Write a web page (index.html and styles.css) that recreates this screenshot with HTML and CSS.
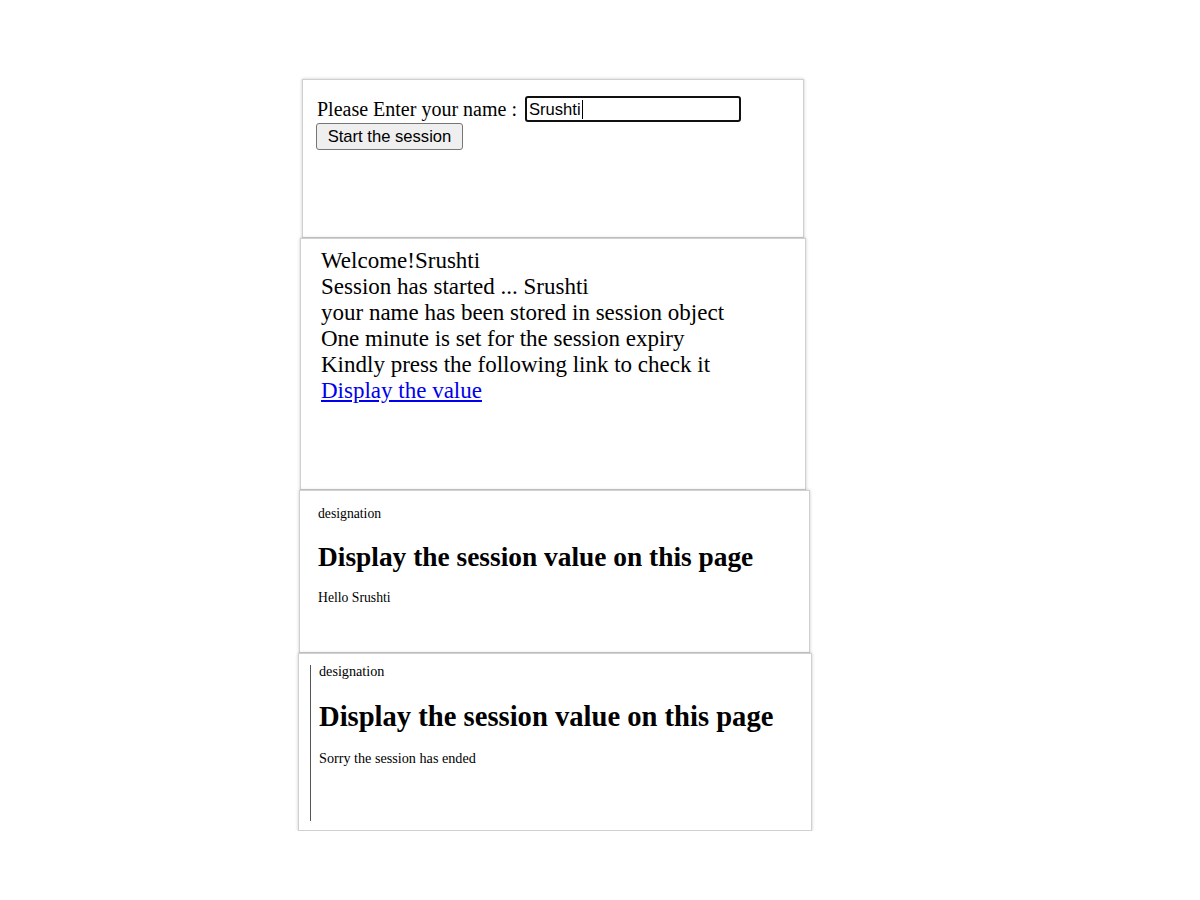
FILE: index.html
```html
<!DOCTYPE html>
<html lang="en">
<head>
<meta charset="utf-8">
<title>Session demo</title>
<link rel="stylesheet" href="styles.css">
</head>
<body>
<main class="stack">
  <section class="shot shot-form">
    <div class="form-row">
      <span class="label">Please Enter your name :</span>
      <div class="field" role="textbox">Srushti<span class="caret"></span></div>
    </div>
    <button class="btn" type="button">Start the session</button>
  </section>

  <section class="shot shot-welcome">
    <div class="lines">
      <div>Welcome!Srushti</div>
      <div>Session has started ... Srushti</div>
      <div>your name has been stored in session object</div>
      <div>One minute is set for the session expiry</div>
      <div>Kindly press the following link to check it</div>
      <div><a href="#" class="link">Display the value</a></div>
    </div>
  </section>

  <section class="shot shot-display">
    <p class="small">designation</p>
    <h1 class="title">Display the session value on this page</h1>
    <p class="small msg">Hello Srushti</p>
  </section>

  <section class="shot shot-ended">
    <div class="ended-inner">
      <p class="small first">designation</p>
      <h1 class="title">Display the session value on this page</h1>
      <p class="small msg">Sorry the session has ended</p>
    </div>
  </section>
</main>
</body>
</html>
```

FILE: styles.css
```css
* { box-sizing: border-box; }

html, body {
  margin: 0;
  background: #ffffff;
}

body {
  font-family: "Liberation Serif", "Times New Roman", serif;
  color: #000;
}

.stack {
  display: flex;
  flex-direction: column;
  align-items: flex-start;
  padding-top: 79px;
}

.shot {
  background: #fff;
  border: 1px solid #d0d0d0;
  box-shadow: 0 0 3px rgba(0, 0, 0, 0.22);
}

/* panel 1 */
.shot-form {
  margin-left: 302px;
  width: 502px;
  height: 159px;
  padding: 16px 0 0 13px;
}

.form-row {
  display: flex;
  align-items: center;
  gap: 8px;
  font-size: 20px;
  padding-left: 1px;
}

.label {
  line-height: 23px;
}

.field {
  width: 216px;
  height: 26px;
  border: 2px solid #101010;
  border-radius: 3px;
  font-family: "Liberation Sans", Arial, sans-serif;
  font-size: 16.6px;
  line-height: 21px;
  padding: 0 2px;
  display: flex;
  align-items: center;
}

.caret {
  display: inline-block;
  width: 1px;
  height: 19px;
  background: #000;
  margin-left: 1px;
}

.btn {
  margin-top: 1px;
  font-family: "Liberation Sans", Arial, sans-serif;
  font-size: 16.6px;
  height: 27px;
  width: 147px;
  padding: 0;
  background: #efefef;
  border: 1px solid #767676;
  border-radius: 3px;
  color: #000;
}

/* panel 2 */
.shot-welcome {
  margin-left: 300px;
  width: 506px;
  height: 252px;
  padding: 9px 0 0 20px;
}

.lines {
  font-size: 23px;
  line-height: 26px;
}

.link {
  color: #0000ee;
  text-decoration: underline;
}

/* panels 3 and 4 */
.small {
  margin: 0;
  font-size: 13.7px;
  line-height: 16px;
}

.title {
  margin: 19px 0 17px;
  font-size: 27.4px;
  line-height: 32px;
  font-weight: bold;
}

.shot-display {
  margin-left: 299px;
  width: 511px;
  height: 163px;
  padding: 15px 0 0 18px;
}

.shot-ended {
  margin-left: 298px;
  width: 514px;
  height: 178px;
  padding: 11px 0 0 11px;
}

.ended-inner {
  display: flow-root;
  border-left: 1px solid #555;
  height: 156px;
  padding: 0 0 0 8px;
}

.shot-ended .small {
  font-size: 14.2px;
}

.shot-ended .first {
  line-height: 12px;
}

.shot-ended .title {
  font-size: 28.6px;
  margin: 24px 0 17px;
}
```
